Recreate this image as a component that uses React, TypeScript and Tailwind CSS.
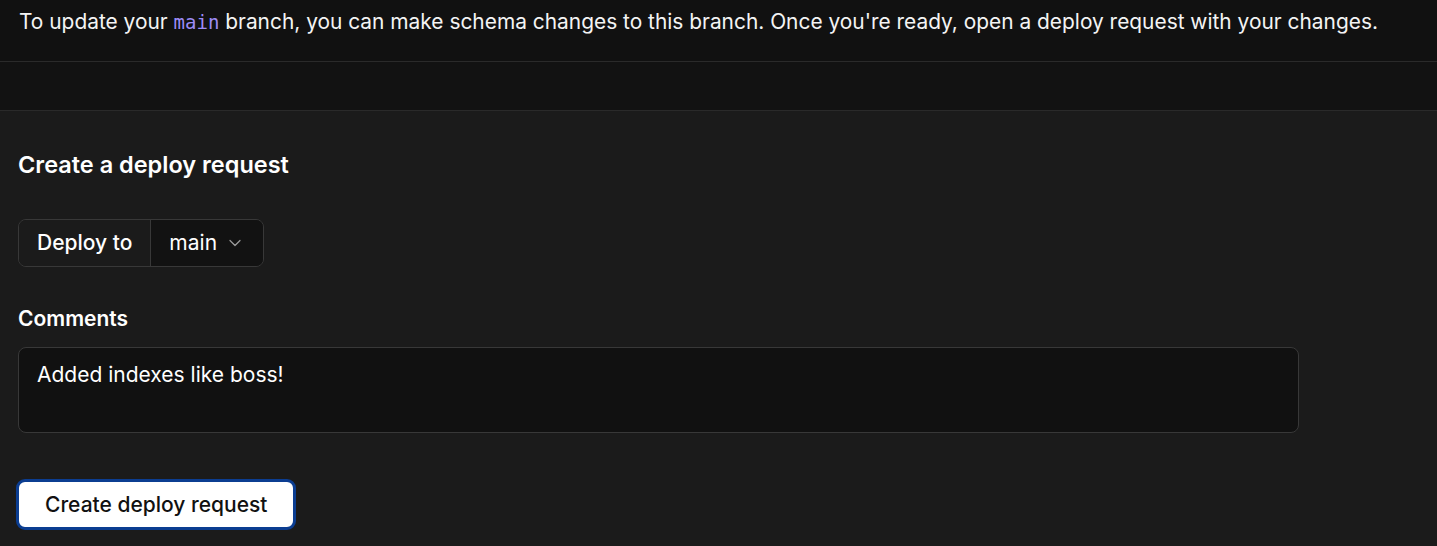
import { ChevronDown } from 'lucide-react';

export default function App() {
  return (
    <div className="min-h-[546px] bg-[#1b1b1b] text-white font-['Inter',sans-serif]">
      {/* Notice bar */}
      <div className="h-[62px] bg-[#111111] border-b border-[#2a2a2a] px-[19px] pt-[8px]">
        <p className="text-[20.9px] leading-[28px] text-[#f4f4f4]">
          To update your{' '}
          <code className="font-['DejaVu_Sans_Mono',monospace] text-[19px] text-[#9d8cf7]">main</code>{' '}
          branch, you can make schema changes to this branch. Once you're ready, open a deploy request with your changes.
        </p>
      </div>
      <div className="h-[49px] bg-[#121212] border-b border-[#2a2a2a]" />

      {/* Form */}
      <div className="px-[18px] pt-[38px]">
        <h2 className="text-[23.5px] leading-[32px] font-semibold text-white">Create a deploy request</h2>

        <div className="mt-[38px] inline-flex h-[48px] items-stretch rounded-[8px] border border-[#383838] overflow-hidden">
          <div className="flex items-center px-[18px] text-[21px] font-medium bg-[#1b1b1b] border-r border-[#383838]">
            Deploy to
          </div>
          <button className="flex items-center gap-[8px] pl-[18px] pr-[18px] bg-[#121212] text-[21px] text-white">
            main
            <ChevronDown className="w-[20px] h-[20px] text-[#9a9a9a]" strokeWidth={1.5} />
          </button>
        </div>

        <label className="block mt-[38px] text-[21px] leading-[28px] font-semibold text-white">Comments</label>
        <textarea
          className="mt-[14px] block w-full max-w-[1281px] h-[86px] resize-none rounded-[8px] border border-[#383838] bg-[#111111] px-[18px] py-[13px] text-[21px] leading-[28px] text-white outline-none"
          defaultValue="Added indexes like boss!"
        />

        <button className="mt-[46px] -ml-[2px] h-[51px] px-[26px] rounded-[9px] bg-white border-[3px] border-[#0b3d91] text-[21px] font-medium text-[#111111]">
          Create deploy request
        </button>
      </div>
    </div>
  );
}
